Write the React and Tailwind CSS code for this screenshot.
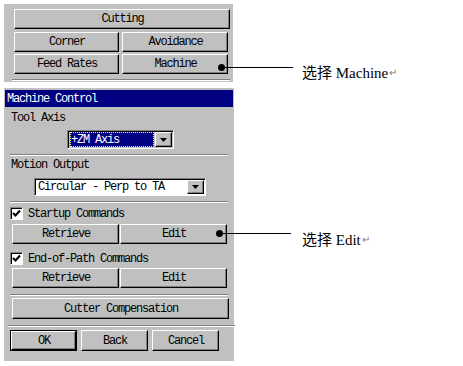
import React from "react";

const font = "font-mono text-[12px] tracking-[-1.2px] leading-none";
const raised =
  "border border-t-white border-l-white border-r-black border-b-black shadow-[inset_-1px_-1px_0_#808080] bg-[#c0c0c0]";
const sunken =
  "border border-t-[#808080] border-l-[#808080] border-r-white border-b-white shadow-[inset_1px_1px_0_#000]";

const Btn = ({ className = "", children }) => (
  <div className={`${raised} flex items-center justify-center text-black ${className}`}>
    <span className="pl-[1px]">{children}</span>
  </div>
);

const Sep = ({ className = "" }) => (
  <div className={`h-[2px] shrink-0 border-t border-t-[#808080] border-b border-b-white ${className}`} />
);

const Arrow = () => (
  <div className={`${raised} w-[17px] h-full flex items-center justify-center shrink-0`}>
    <svg width="7" height="4" viewBox="0 0 7 4">
      <polygon points="0,0 7,0 3.5,4" fill="#000" />
    </svg>
  </div>
);

const Check = () => (
  <div className={`${sunken} w-[13px] h-[13px] bg-white flex items-center justify-center shrink-0`}>
    <svg width="9" height="9" viewBox="0 0 9 9">
      <polyline points="1,4 3.5,6.5 8,1.5" fill="none" stroke="#000" strokeWidth="2" />
    </svg>
  </div>
);

// callout: dot + leader line + Chinese note, hanging over the button
const Callout = ({ dotTop, textTop, textLeft, label }) => (
  <>
    <div
      className="absolute left-[96px] w-[7px] h-[7px] rounded-full bg-black"
      style={{ top: dotTop }}
    />
    <div className="absolute left-[99px] w-[72px] h-[1px] bg-black" style={{ top: dotTop + 3 }} />
    <div
      className="absolute h-[20px] flex items-center whitespace-nowrap text-[15px] text-black tracking-normal font-['Liberation_Serif','Noto_Sans_CJK_SC',serif]"
      style={{ top: textTop, left: textLeft }}
    >
      选择 {label}
      <span className="text-[10px] text-[#808080] ml-[1px]">↵</span>
    </div>
  </>
);

export default function App() {
  return (
    <div className={`w-[463px] h-[366px] bg-white flex flex-col ${font}`}>
      {/* top menu panel */}
      <div className="w-[229px] h-[78px] shrink-0 bg-[#c0c0c0] ml-[4px] mt-[4px] pt-[5px] pl-[10px] flex flex-col">
        <Btn className="w-[216px] h-[20px] shrink-0">Cutting</Btn>
        <div className="flex gap-[3px] mt-[3px]">
          <Btn className="w-[105px] h-[20px]">Corner</Btn>
          <Btn className="w-[106px] h-[20px]">Avoidance</Btn>
        </div>
        <div className="flex gap-[3px] mt-[2px]">
          <Btn className="w-[105px] h-[20px]">Feed Rates</Btn>
          <div className="relative">
            <Btn className="w-[106px] h-[20px]">Machine</Btn>
            <Callout dotTop={10} textTop={9} textLeft={180} label="Machine" />
          </div>
        </div>
        <Sep className="mt-[5px] -ml-[2px] w-[218px]" />
      </div>

      {/* Machine Control dialog */}
      <div className="w-[230px] h-[273px] shrink-0 bg-[#c0c0c0] ml-[4px] mt-[6px] pt-[2px] px-[1px] flex flex-col">
        <div className="h-[17px] shrink-0 bg-[#000080] text-white pl-[2px] flex items-center">Machine Control</div>

        <div className="mt-[3px] h-[16px] shrink-0 pl-[6px] flex items-center">Tool Axis</div>
        <div className={`${sunken} mt-[4px] ml-[62px] w-[107px] h-[19px] shrink-0 flex p-[1px] pl-[2px]`}>
          <div className="flex-1 bg-[#000080] text-white border border-dotted border-[#ffff80] flex items-center mr-[1px]">
            +ZM Axis
          </div>
          <Arrow />
        </div>
        <Sep className="mt-[5px] ml-[5px] w-[218px]" />

        <div className="h-[18px] shrink-0 pl-[6px] flex items-center">Motion Output</div>
        <div className={`${sunken} mt-[4px] ml-[29px] w-[172px] h-[18px] shrink-0 flex bg-white p-[1px] pl-[3px]`}>
          <div className="flex-1 flex items-center text-black">Circular - Perp to TA</div>
          <Arrow />
        </div>
        <Sep className="mt-[5px] ml-[5px] w-[218px]" />

        <div className="mt-[2px] h-[17px] shrink-0 pl-[5px] flex items-center gap-[5px]">
          <Check />
          <span>Startup Commands</span>
        </div>
        <div className="mt-[2px] ml-[7px] h-[20px] shrink-0 flex gap-[1px]">
          <Btn className="w-[107px] h-[20px]">Retrieve</Btn>
          <div className="relative">
            <Btn className="w-[107px] h-[20px]">Edit</Btn>
            <Callout dotTop={6} textTop={6} textLeft={182} label="Edit" />
          </div>
        </div>

        <div className="mt-[6px] h-[17px] shrink-0 pl-[5px] flex items-center gap-[5px]">
          <Check />
          <span>End-of-Path Commands</span>
        </div>
        <div className="mt-[1px] ml-[7px] h-[20px] shrink-0 flex gap-[1px]">
          <Btn className="w-[107px] h-[20px]">Retrieve</Btn>
          <Btn className="w-[107px] h-[20px]">Edit</Btn>
        </div>
        <Sep className="mt-[6px] ml-[5px] w-[218px]" />

        <Btn className="mt-[2px] ml-[7px] w-[217px] h-[21px] shrink-0">Cutter Compensation</Btn>
        <Sep className="mt-[6px] ml-[3px] w-[227px]" />

        <div className="mt-[3px] ml-[5px] h-[21px] shrink-0 flex gap-[4px]">
          <div className="w-[67px] h-[21px] border border-black flex">
            <Btn className="flex-1">OK</Btn>
          </div>
          <Btn className="w-[67px] h-[21px]">Back</Btn>
          <Btn className="w-[67px] h-[21px]">Cancel</Btn>
        </div>
      </div>
    </div>
  );
}
